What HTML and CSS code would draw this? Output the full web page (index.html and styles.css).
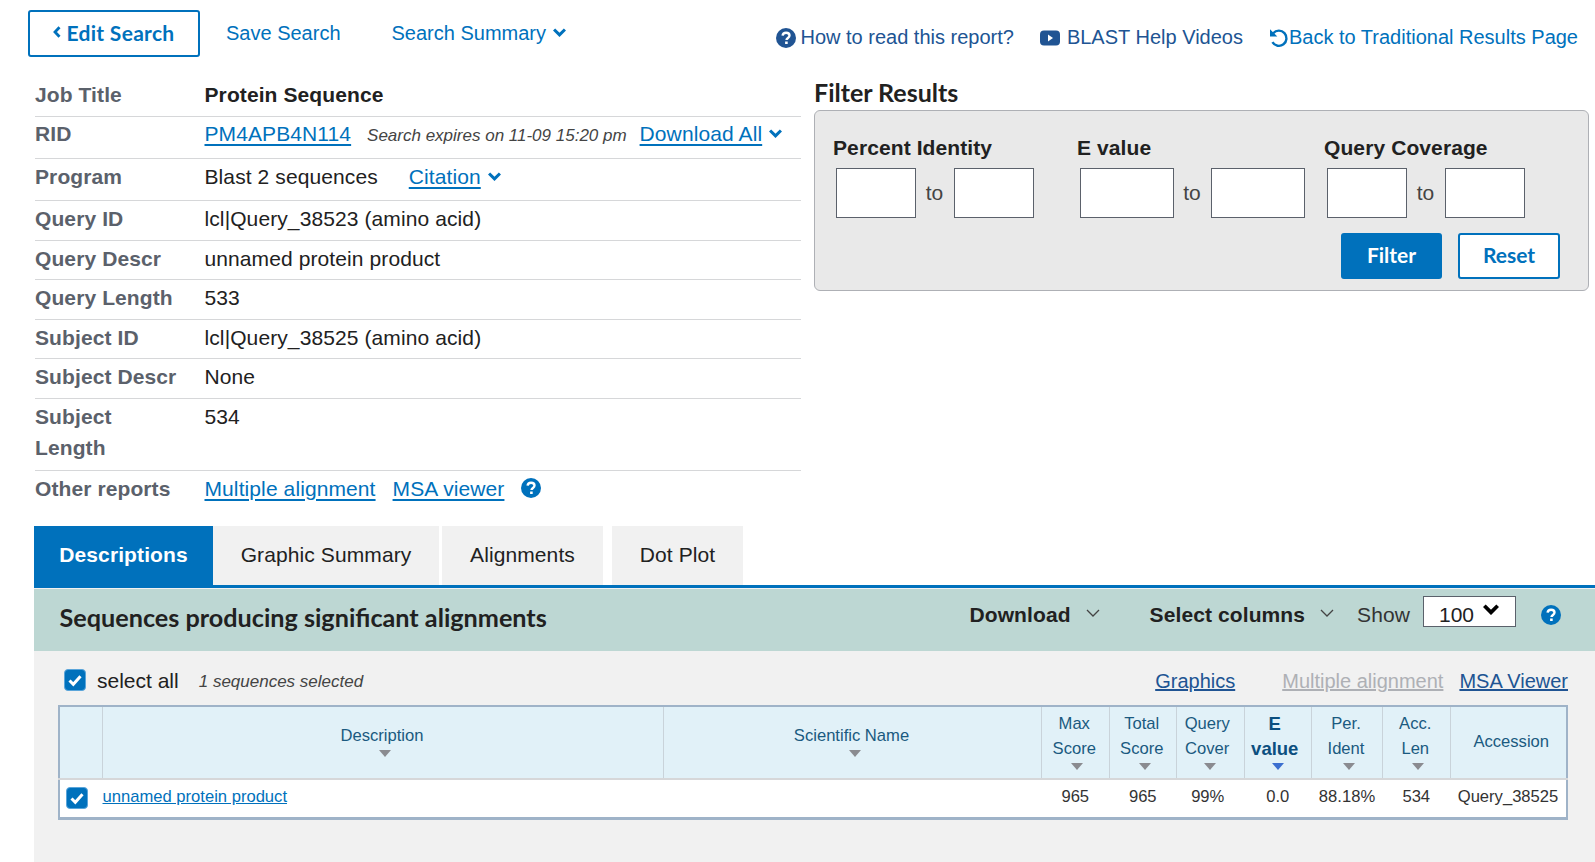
FILE: index.html
```html
<!DOCTYPE html>
<html lang="en">
  <head>
    <meta charset="UTF-8" />
    <meta name="viewport" content="width=device-width, initial-scale=1.0" />
    <title>BLAST Results</title>
    <link rel="stylesheet" href="styles.css">
  </head>

  <body>
    <svg class="sprites" width="0" height="0">
      <symbol id="iconHelp" viewBox="0 0 20 20">
        <circle cx="10" cy="10" r="10" fill="currentColor" />
        <path d="M6.6 7.6c.2-1.9 1.6-2.9 3.5-2.9 2 0 3.4 1.1 3.4 2.8 0 2.4-3 2.4-3 4.500" fill="none" stroke="#fff" stroke-width="2.400" />
        <rect x="9.100" y="13.500" width="2.600" height="2.500" fill="#fff" />
      </symbol>
      <symbol id="iconCheck" viewBox="0 0 22 22">
        <rect x="0.500" y="0.500" width="21" height="21" rx="3.500" fill="#0071bc" stroke="#5aa5da" />
        <path d="M5.500 11.500l3.800 3.800 7.200-8" fill="none" stroke="#fff" stroke-width="3" />
      </symbol>
      <symbol id="iconChevron" viewBox="0 0 12 8">
        <path d="M1 1.200L6 6.200l5-5" fill="none" stroke="currentColor" stroke-width="2.800" />
      </symbol>
      <symbol id="iconThin" viewBox="0 0 14 8">
        <path d="M1 1l6 6 6-6" fill="none" stroke="currentColor" stroke-width="1.300" />
      </symbol>
    </svg>

    <div class="page">
      <header class="topBar">
        <a class="btn btnOutline editBtn" href="#">
          <svg class="backChevron" viewBox="0 0 8 12"><path d="M6.500 1.200L2 6l4.500 4.800" fill="none" stroke="currentColor" stroke-width="2.800" /></svg>
          Edit Search
        </a>
        <a class="navLink saveLink" href="#">Save Search</a>
        <a class="navLink" href="#">Search Summary <svg class="chevron"><use href="#iconChevron" /></svg></a>

        <nav class="helpLinks">
          <a class="helpLink readLink" href="#"><svg class="icon20"><use href="#iconHelp" /></svg>How to read this report?</a>
          <a class="helpLink" href="#">
            <svg class="videoIcon" viewBox="0 0 20 16"><rect width="20" height="15" y="0.500" rx="4" fill="currentColor" /><path d="M8 4.500l5 3.500-5 3.500z" fill="#fff" /></svg>
            BLAST Help Videos
          </a>
          <a class="helpLink backLink" href="#">
            <svg class="icon20" viewBox="0 0 20 20"><path d="M4.200 5.200a7.600 7.600 0 1 1-.8 9" fill="none" stroke="currentColor" stroke-width="2.400" /><path d="M1 1.200v7.300h7.300z" fill="currentColor" /></svg>Back to Traditional Results Page
          </a>
        </nav>
      </header>

      <section class="summary">
        <div class="jobInfo">
          <div class="infoRow firstRow"><div class="infoLabel">Job Title</div><div class="jobTitle">Protein Sequence</div></div>
          <div class="infoRow ridRow">
            <div class="infoLabel">RID</div>
            <div>
              <a class="infoLink" href="#">PM4APB4N114</a>
              <span class="expires">Search expires on 11-09 15:20 pm</span>
              <a class="infoLink" href="#">Download All</a>
              <svg class="chevron"><use href="#iconChevron" /></svg>
            </div>
          </div>
          <div class="infoRow programRow">
            <div class="infoLabel">Program</div>
            <div>
              Blast 2 sequences
              <a class="infoLink citation" href="#">Citation</a>
              <svg class="chevron"><use href="#iconChevron" /></svg>
            </div>
          </div>
          <div class="infoRow queryRow"><div class="infoLabel">Query ID</div><div>lcl|Query_38523 (amino acid)</div></div>
          <div class="infoRow"><div class="infoLabel">Query Descr</div><div>unnamed protein product</div></div>
          <div class="infoRow"><div class="infoLabel">Query Length</div><div>533</div></div>
          <div class="infoRow"><div class="infoLabel">Subject ID</div><div>lcl|Query_38525 (amino acid)</div></div>
          <div class="infoRow"><div class="infoLabel">Subject Descr</div><div>None</div></div>
          <div class="infoRow subjectRow"><div class="infoLabel">Subject Length</div><div>534</div></div>
          <div class="infoRow lastRow">
            <div class="infoLabel">Other reports</div>
            <div class="reportLinks">
              <a class="infoLink" href="#">Multiple alignment</a>
              <a class="infoLink" href="#">MSA viewer</a>
              <svg class="icon20 reportHelp"><use href="#iconHelp" /></svg>
            </div>
          </div>
        </div>

        <div class="filterPanel">
          <h2 class="filterTitle">Filter Results</h2>
          <form class="filterBox">
            <div class="filterGroups">
              <div class="filterGroup groupIdentity">
                <label class="filterLabel">Percent Identity</label>
                <div class="rangeRow"><input class="rangeInput" type="text" /><span class="rangeTo">to</span><input class="rangeInput" type="text" /></div>
              </div>
              <div class="filterGroup groupEvalue">
                <label class="filterLabel">E value</label>
                <div class="rangeRow"><input class="rangeInput wide" type="text" /><span class="rangeTo">to</span><input class="rangeInput wide" type="text" /></div>
              </div>
              <div class="filterGroup">
                <label class="filterLabel">Query Coverage</label>
                <div class="rangeRow"><input class="rangeInput" type="text" /><span class="rangeTo">to</span><input class="rangeInput" type="text" /></div>
              </div>
            </div>
            <div class="filterActions">
              <button class="btn btnFill" type="button">Filter</button>
              <button class="btn btnOutline" type="button">Reset</button>
            </div>
          </form>
        </div>
      </section>

      <ul class="tabs">
        <li class="tab active tabDescriptions">Descriptions</li>
        <li class="tab tabGraphic">Graphic Summary</li>
        <li class="tab tabAlignments">Alignments</li>
        <li class="tab tabDot">Dot Plot</li>
      </ul>

      <main class="results">
        <div class="resultsBar">
          <h2 class="resultsTitle">Sequences producing significant alignments</h2>
          <div class="resultsTools">
            <span class="toolMenu menuDownload">Download <svg class="thinChevron"><use href="#iconThin" /></svg></span>
            <span class="toolMenu menuColumns">Select columns <svg class="thinChevron"><use href="#iconThin" /></svg></span>
            <span class="showLabel">Show</span>
            <div class="showSelect"><span class="showValue">100</span><svg class="selectChevron"><use href="#iconChevron" /></svg></div>
            <svg class="icon20 barHelp"><use href="#iconHelp" /></svg>
          </div>
        </div>

        <div class="selectRow">
          <svg class="checkbox allCheck"><use href="#iconCheck" /></svg>
          <span class="selectAll">select all</span>
          <span class="selectedCount">1 sequences selected</span>
          <div class="selectLinks">
            <a class="darkLink graphicsLink" href="#">Graphics</a>
            <a class="darkLink disabled" href="#">Multiple alignment</a>
            <a class="darkLink" href="#">MSA Viewer</a>
          </div>
        </div>

        <table class="hitTable">
          <colgroup>
            <col class="colCheck" />
            <col class="colDesc" />
            <col class="colName" />
            <col class="colNum" />
            <col class="colNum" />
            <col class="colNum" />
            <col class="colNum" />
            <col class="colPer" />
            <col class="colNum" />
            <col />
          </colgroup>
          <thead>
            <tr>
              <th></th>
              <th>Description<span class="sort"></span></th>
              <th>Scientific Name<span class="sort"></span></th>
              <th>Max<br />Score<span class="sort"></span></th>
              <th>Total<br />Score<span class="sort"></span></th>
              <th class="tight">Query<br />Cover<span class="sort"></span></th>
              <th class="tight sorted">E<br />value<span class="sort"></span></th>
              <th>Per.<br />Ident<span class="sort"></span></th>
              <th>Acc.<br />Len<span class="sort"></span></th>
              <th class="accHead">Accession</th>
            </tr>
          </thead>
          <tbody>
            <tr>
              <td class="checkCell"><svg class="checkbox"><use href="#iconCheck" /></svg></td>
              <td class="descCell"><a class="hitLink" href="#">unnamed protein product</a></td>
              <td></td>
              <td>965</td>
              <td>965</td>
              <td class="tight">99%</td>
              <td>0.0</td>
              <td>88.18%</td>
              <td>534</td>
              <td>Query_38525</td>
            </tr>
          </tbody>
        </table>
      </main>
    </div>
  </body>
</html>
```

FILE: styles.css
```css
* {
  box-sizing: border-box;
  margin: 0;
  padding: 0;
}

body {
  font-family: "Liberation Sans", Arial, sans-serif;
  font-size: 20px;
  color: #212121;
  background-color: #fff;
}

a {
  color: #0071bc;
}

.sprites {
  display: block;
  height: 0;
}

.page {
  display: flex;
  flex-direction: column;
  min-height: 100vh;
}

/* top bar */
.topBar {
  display: flex;
  align-items: flex-start;
  height: 77px;
  padding: 10px 17px 0 28px;
}

.btn {
  display: flex;
  align-items: center;
  justify-content: center;
  font-family: Lato, "Liberation Sans", sans-serif;
  font-size: 21px;
  font-weight: 700;
  height: 46px;
  padding-bottom: 3px;
  border-radius: 3px;
  text-decoration: none;
  cursor: pointer;
}

.btnOutline {
  width: 102px;
  background-color: #fff;
  border: 2px solid #0071bc;
  color: #0071bc;
}

.btnFill {
  width: 101px;
  background-color: #0071bc;
  border: none;
  color: #fff;
}

.editBtn {
  width: 172px;
  height: 47px;
  gap: 5px;
  letter-spacing: 0.3px;
}

.backChevron {
  width: 8px;
  height: 12px;
  margin-bottom: 1px;
}

.navLink {
  margin-top: 12px;
  text-decoration: none;
  line-height: 23px;
}

.saveLink {
  margin: 12px 51px 0 26px;
}

.chevron {
  width: 13px;
  height: 9px;
  margin: 0 0 3px 1px;
  color: #0071bc;
}

.helpLinks {
  display: flex;
  align-items: center;
  gap: 26px;
  margin: 16px 0 0 auto;
}

.helpLink {
  display: flex;
  align-items: center;
  gap: 5px;
  color: #205493;
  text-decoration: none;
  line-height: 23px;
}

.readLink {
  gap: 4px;
}

.backLink {
  gap: 0;
  color: #0071bc;
}

.icon20 {
  width: 20px;
  height: 20px;
  flex: none;
}

.videoIcon {
  width: 20px;
  height: 16px;
  margin-right: 2px;
}

/* job summary and filter */
.summary {
  display: flex;
  gap: 13px;
  padding-left: 35px;
}

.jobInfo {
  width: 766px;
  font-size: 21px;
  letter-spacing: 0.1px;
}

.infoRow {
  display: flex;
  padding: 2px 0 5px;
  border-bottom: 1px solid #d6d7d9;
  line-height: 31.5px;
}

.firstRow {
  padding: 1.500px 0 5.500px;
}

.ridRow {
  padding-top: 1px;
  padding-bottom: 6.500px;
}

.programRow {
  padding-top: 2px;
  padding-bottom: 7.500px;
}

.queryRow {
  padding-bottom: 5.500px;
}

.subjectRow {
  padding-bottom: 6px;
}

.lastRow {
  border-bottom: none;
  height: 55px;
}

.infoLabel {
  width: 142px;
  margin-right: 27.5px;
  font-weight: 700;
  color: #5b616b;
  flex: none;
}

.jobTitle {
  font-weight: 700;
}

.infoLink {
  text-decoration-thickness: 2px;
  text-underline-offset: 3px;
}

.expires {
  margin: 0 7px 0 10px;
  font-size: 17px;
  font-style: italic;
  letter-spacing: 0;
  color: #444;
}

.citation {
  margin-left: 25px;
}

.reportLinks {
  display: flex;
  align-items: center;
  height: 31.5px;
  gap: 17px;
}

.reportHelp {
  margin-left: 0;
  color: #0071bc;
}

.filterPanel {
  width: 775px;
}

.filterTitle {
  font-family: Lato, "Liberation Sans", sans-serif;
  font-size: 25px;
  font-weight: 700;
  line-height: 30px;
  margin-bottom: 3px;
}

.filterBox {
  height: 181px;
  padding: 21px 28px 0 18px;
  background-color: #e9e9e9;
  border: 1px solid #aeb0b5;
  border-radius: 6px;
}

.filterGroups {
  display: flex;
}

.groupIdentity {
  width: 244px;
}

.groupEvalue {
  width: 247px;
}

.filterLabel {
  display: block;
  font-size: 21px;
  font-weight: 700;
  letter-spacing: 0.1px;
  line-height: 32px;
  margin-bottom: 4px;
}

.rangeRow {
  display: flex;
  align-items: center;
  margin-left: 2.500px;
}

.rangeInput {
  width: 80px;
  height: 50px;
  background-color: #fff;
  border: 1px solid #5b616b;
}

.rangeInput.wide {
  width: 94px;
}

.rangeTo {
  width: 38px;
  font-size: 21px;
  text-align: center;
  color: #444;
}

.wide + .rangeTo {
  width: 37px;
}

.filterActions {
  display: flex;
  justify-content: flex-end;
  gap: 16px;
  margin-top: 15px;
}

/* tabs */
.tabs {
  display: flex;
  list-style: none;
  margin: 0 0 0 34px;
  height: 59px;
  font-size: 21px;
  letter-spacing: 0.1px;
}

.tab {
  display: flex;
  align-items: center;
  justify-content: center;
  background-color: #f1f1f1;
}

.tab.active {
  background-color: #0071bc;
  color: #fff;
  font-weight: 700;
}

.tabDescriptions {
  width: 179px;
}

.tabGraphic {
  width: 226px;
  margin-right: 3px;
}

.tabAlignments {
  width: 161px;
  margin-right: 9px;
}

.tabDot {
  width: 131px;
}

/* results */
.results {
  flex: 1;
  margin-left: 34px;
  background-color: #f1f1f1;
  border-top: 3px solid #0071bc;
}

.resultsBar {
  display: flex;
  align-items: center;
  height: 62px;
  margin-top: 1px;
  padding: 0 34px 5px 25.500px;
  background-color: #bdd7d3;
}

.resultsTitle {
  font-family: Lato, "Liberation Sans", sans-serif;
  font-size: 25.2px;
  font-weight: 700;
}

.resultsTools {
  display: flex;
  align-items: center;
  margin: -4px 0 0 auto;
}

.toolMenu {
  display: flex;
  align-items: center;
  font-size: 21px;
  font-weight: 700;
  letter-spacing: 0.1px;
}

.thinChevron {
  width: 14px;
  height: 8px;
  margin-bottom: 4px;
  color: #444;
}

.menuDownload {
  gap: 15px;
  margin-right: 50px;
}

.menuColumns {
  gap: 15px;
  margin-right: 23px;
}

.showLabel {
  font-size: 21px;
  letter-spacing: 0.1px;
  color: #333;
}

.showSelect {
  display: flex;
  align-items: center;
  gap: 9px;
  width: 93px;
  height: 31px;
  margin: 0 0 8px 13px;
  padding-left: 15px;
  background-color: #fff;
  border: 1px solid #5b616b;
  font-size: 21px;
}

.showValue {
  margin-top: 8px;
}

.selectChevron {
  width: 16px;
  height: 11px;
  margin-bottom: 4px;
  color: #000;
}

.barHelp {
  margin: 0 0 1px 25px;
  color: #0071bc;
}

.selectRow {
  display: flex;
  align-items: center;
  height: 54px;
  padding: 7px 27px 0 30px;
}

.checkbox {
  width: 22px;
  height: 22px;
  display: block;
}

.allCheck {
  margin-bottom: 3px;
}

.selectAll {
  margin-left: 11px;
  font-size: 21px;
}

.selectedCount {
  margin: 2px 0 0 20px;
  font-size: 17px;
  font-style: italic;
  color: #444;
}

.selectLinks {
  display: flex;
  gap: 16px;
  margin-left: auto;
}

.darkLink {
  color: #205493;
}

.darkLink.disabled {
  color: #aeb0b5;
}

.graphicsLink {
  margin-right: 31px;
}

.hitTable {
  width: 1510.500px;
  margin-left: 23.500px;
  table-layout: fixed;
  border-collapse: collapse;
  border: 2px solid #9fb3c8;
  border-bottom-width: 3px;
  font-size: 16.6px;
}

.colCheck {
  width: 44px;
}

.colDesc {
  width: 561px;
}

.colName {
  width: 378px;
}

.colNum {
  width: 67.5px;
}

.colPer {
  width: 71px;
}

.hitTable th {
  height: 73px;
  padding: 0 2px 4px 0;
  background-color: #e1f1f8;
  border-left: 1px solid #c9d3da;
  border-bottom: 2px solid #d6d7d9;
  font-weight: 400;
  line-height: 25px;
  color: #1a5a80;
}

.hitTable th.tight {
  padding-right: 6px;
}

.hitTable th.sorted {
  font-size: 18.5px;
  font-weight: 700;
  color: #0b4f7f;
}

.hitTable th.accHead {
  padding: 0 0 2px 6px;
}

.sort {
  display: block;
  width: 0;
  height: 0;
  margin: 2px auto 0;
  transform: translateX(3px);
  border-left: 6.500px solid transparent;
  border-right: 6.500px solid transparent;
  border-top: 7px solid #8a8b90;
}

.sorted .sort {
  border-top-color: #3b6fd0;
}

.hitTable td {
  height: 40px;
  padding-bottom: 2px;
  background-color: #fff;
  text-align: center;
  color: #333;
}

.hitTable td.tight {
  padding-right: 5px;
}

.hitTable .checkCell {
  padding: 0 0 0 6px;
}

.hitTable .descCell {
  text-align: left;
}

.hitLink {
  color: #0071bc;
}
```
